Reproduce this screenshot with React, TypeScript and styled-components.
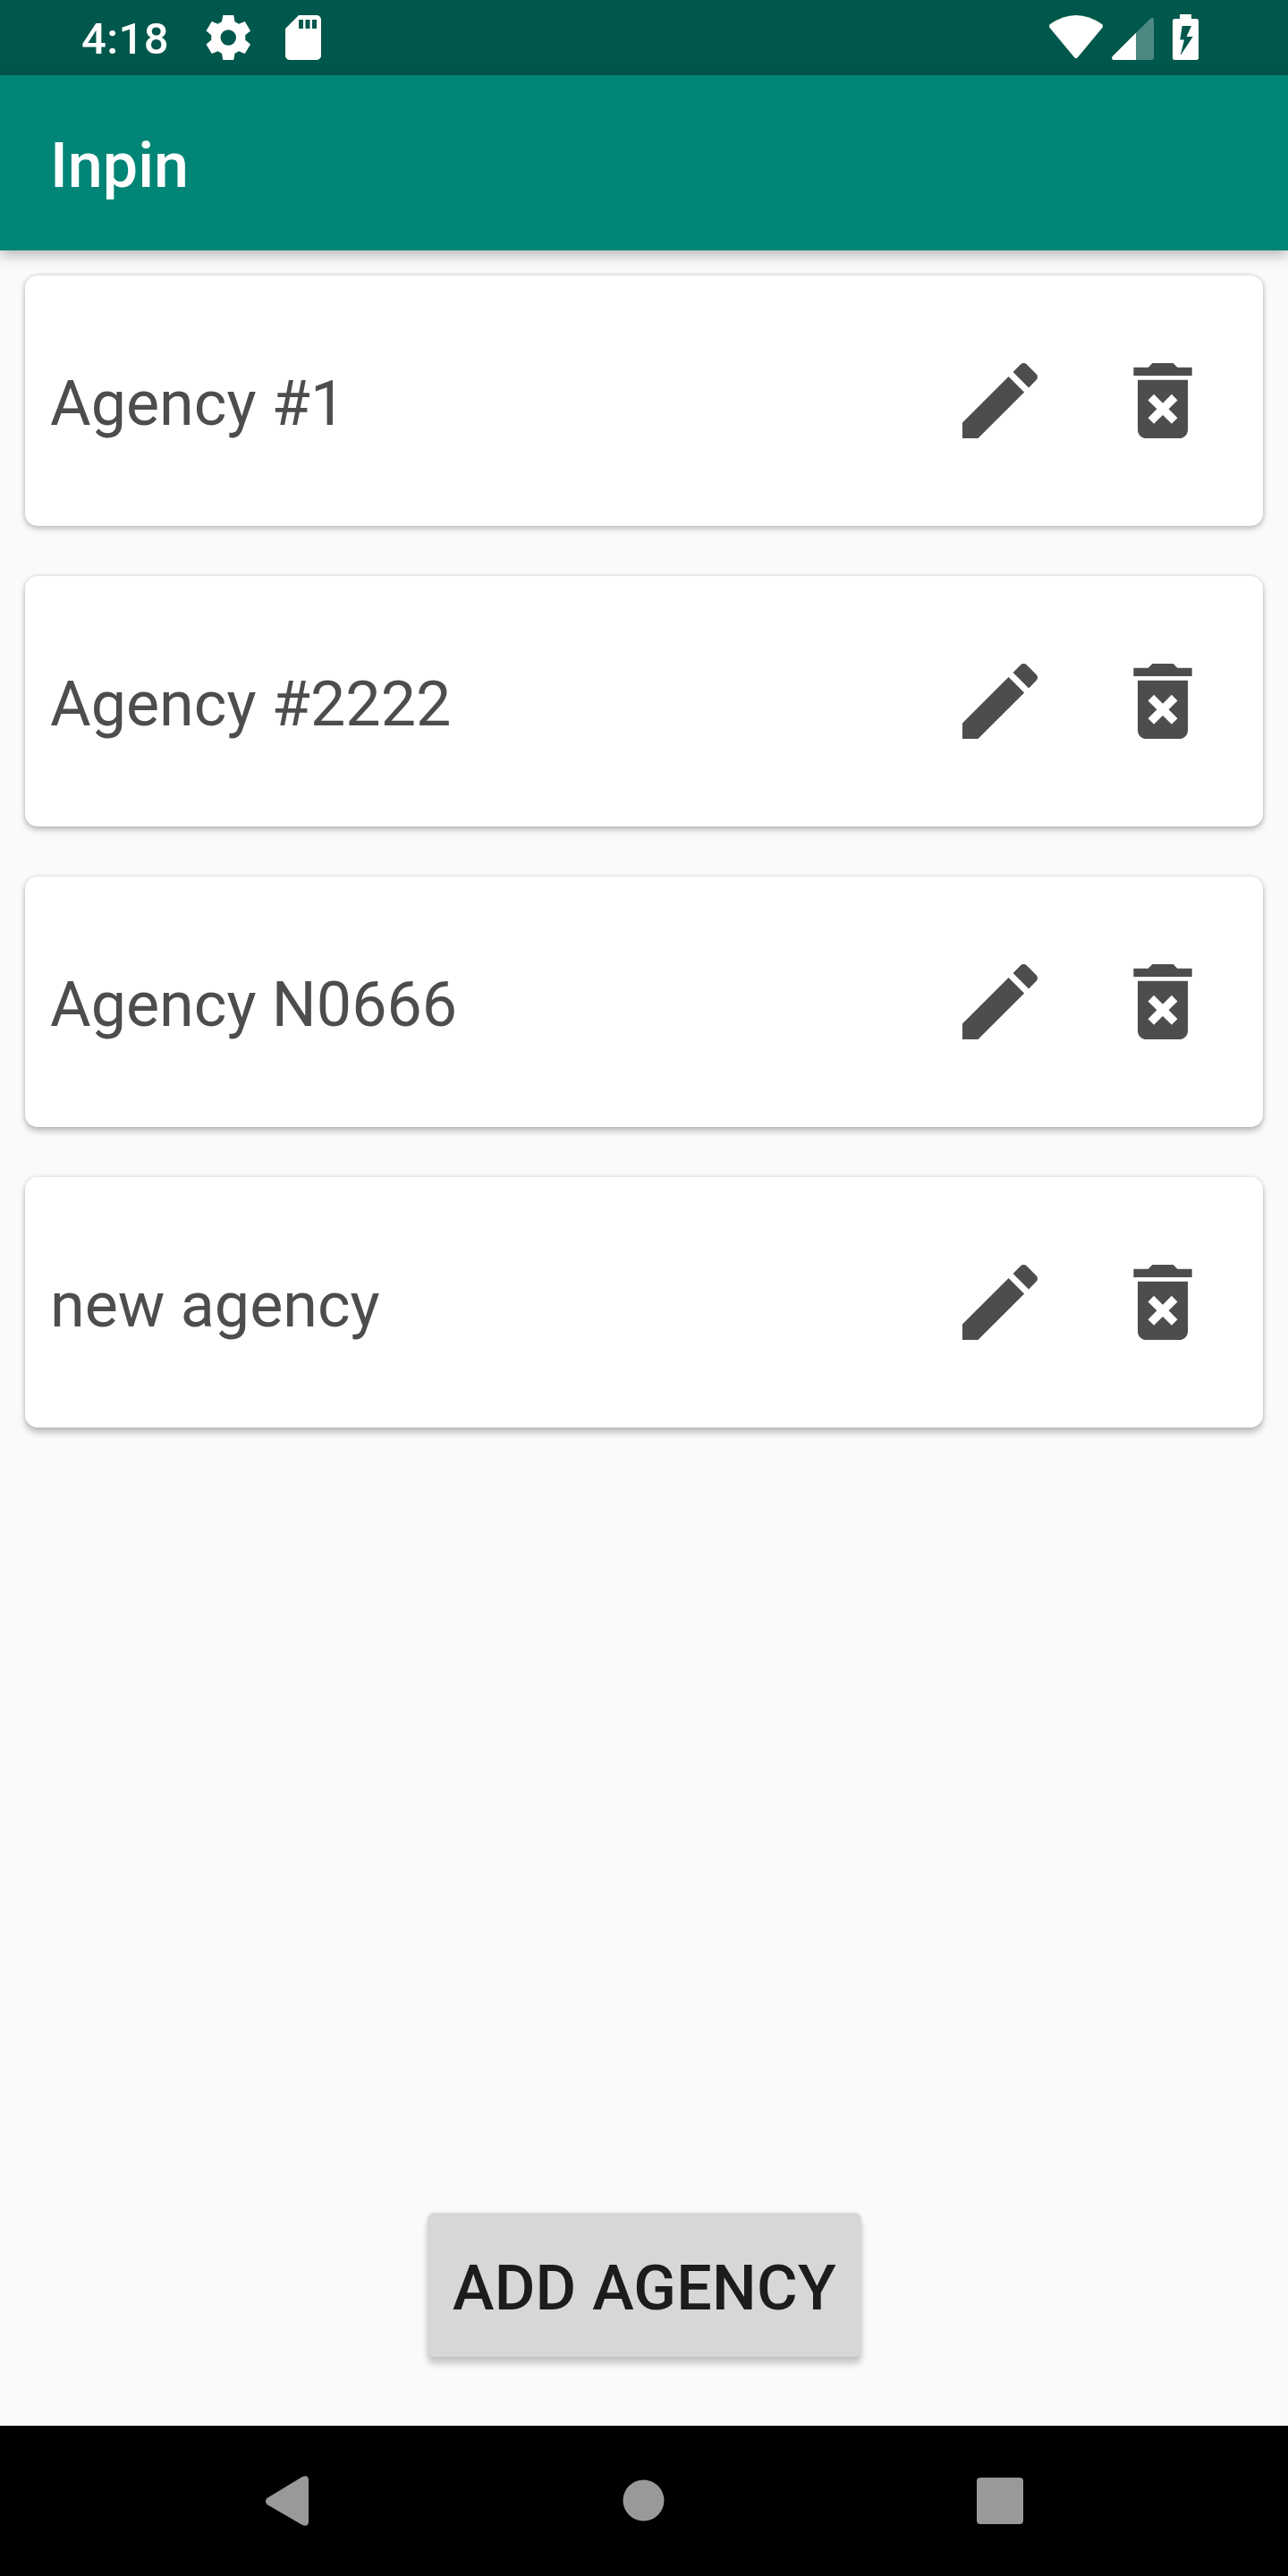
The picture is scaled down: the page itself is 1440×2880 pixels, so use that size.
import React from "react";
import styled, { createGlobalStyle } from "styled-components";

const GlobalStyle = createGlobalStyle`
  * { box-sizing: border-box; }
  body { margin: 0; background: #fafafa; font-family: Roboto, "Liberation Sans", sans-serif; }
  button { font: inherit; border: 0; background: none; padding: 0; }
`;

const Screen = styled.div`
  width: 1440px;
  height: 2880px;
  display: flex;
  flex-direction: column;
  background: #fafafa;
  overflow: hidden;
`;

const StatusBar = styled.header`
  height: 84px;
  flex: none;
  display: flex;
  align-items: center;
  justify-content: space-between;
  padding: 0 85px 0 91px;
  background: #00574b;
  color: #fff;
`;

const StatusGroup = styled.div<{ $gap: number }>`
  display: flex;
  align-items: center;
  gap: ${(p) => p.$gap}px;
`;

const Clock = styled.time`
  width: 110px;
  padding-top: 4px;
  font-size: 49px;
  line-height: 58px;
  font-weight: 500;
  letter-spacing: 0.4px;
`;

const Toolbar = styled.div`
  height: 196px;
  flex: none;
  display: flex;
  align-items: center;
  padding: 6px 56px 0;
  background: #008577;
  box-shadow: 0 5px 14px rgba(0, 0, 0, 0.28);
`;

const Title = styled.h1`
  margin: 0;
  color: #fff;
  font-size: 70px;
  line-height: 82px;
  font-weight: 500;
`;

const List = styled.ul`
  flex: 1;
  margin: 0;
  padding: 28px;
  list-style: none;
  display: flex;
  flex-direction: column;
  gap: 56px;
`;

const Card = styled.li<{ $drop: number }>`
  height: 280px;
  padding: 0 28px;
  display: flex;
  align-items: center;
  gap: 14px;
  border-radius: 14px;
  background: #fff;
  box-shadow: 0 ${(p) => p.$drop}px 7px rgba(0, 0, 0, 0.22), 0 0 5px rgba(0, 0, 0, 0.14);
`;

const AgencyName = styled.span`
  flex: 1;
  padding-top: 6px;
  font-size: 70px;
  line-height: 82px;
  color: #4d4d4d;
`;

const IconButton = styled.button`
  width: 168px;
  height: 168px;
  display: flex;
  align-items: center;
  justify-content: center;
  color: #4d4d4d;
`;

const Footer = styled.div`
  flex: none;
  display: flex;
  justify-content: center;
  padding: 0 0 77px 1px;
`;

const AddButton = styled.button`
  && {
    width: 485px;
    height: 161px;
    padding-top: 6px;
    border-radius: 7px;
    background: #d6d8d7;
    color: #1c1c1c;
    font-size: 70px;
    line-height: 82px;
    font-weight: 500;
    letter-spacing: 0.25px;
    white-space: nowrap;
    box-shadow: 0 8px 7px rgba(0, 0, 0, 0.2), 0 0 4px rgba(0, 0, 0, 0.08);
  }
`;

const NavBar = styled.nav`
  height: 168px;
  flex: none;
  display: flex;
  align-items: center;
  justify-content: space-between;
  padding: 0 266px;
  background: #000;
`;

const Icon = styled.svg<{ $w: number; $h?: number }>`
  display: block;
  flex: none;
  width: ${(p) => p.$w}px;
  height: ${(p) => p.$h ?? p.$w}px;
  fill: currentColor;
`;

const NavIcon = styled(Icon)`
  color: #999;
`;

const agencies = ["Agency #1", "Agency #2222", "Agency N0666", "new agency"];

const PencilIcon = () => (
  <Icon $w={112} viewBox="0 0 24 24">
    <path d="M3 17.25V21h3.75L17.81 9.94l-3.75-3.75L3 17.25zM20.71 7.04c.39-.39.39-1.02 0-1.41l-2.34-2.34c-.39-.39-1.02-.39-1.41 0l-1.83 1.83 3.75 3.75 1.83-1.83z" />
  </Icon>
);

const TrashIcon = () => (
  <Icon $w={112} viewBox="0 0 24 24">
    <path
      fillRule="evenodd"
      d="M6 19c0 1.1.9 2 2 2h8c1.1 0 2-.9 2-2V7H6v12zm2.46-7.12l1.41-1.41L12 12.59l2.12-2.12 1.41 1.41L13.41 14l2.12 2.12-1.41 1.41L12 15.41l-2.12 2.12-1.41-1.41L10.59 14l-2.13-2.12zM15.5 4l-1-1h-5l-1 1H5v2h14V4z"
    />
  </Icon>
);

export default function App() {
  return (
    <>
      <GlobalStyle />
      <Screen>
        <StatusBar>
          <StatusGroup $gap={24}>
            <Clock>4:18</Clock>
            <Icon $w={60} viewBox="0 0 24 24">
              <path
                fillRule="evenodd"
                d="M9.7 2h4.8l.5 2.9 1.8 1 2.700-1.100 2.500 4.200L19.700 10.900v2.200l2.300 1.900-2.500 4.200-2.700-1.100-1.800 1-.5 2.900H9.700l-.5-2.900-1.800-1-2.700 1.100-2.500-4.200 2.300-1.900v-2.200L2.200 9l2.500-4.200 2.700 1.100 1.800-1zM12.100 8.500a3.500 3.500 0 1 0 0 7 3.500 3.500 0 0 0 0-7z"
              />
            </Icon>
            <Icon $w={60} viewBox="0 0 24 24">
              <path d="M18 2h-8L4.02 8 4 20c0 1.1.9 2 2 2h12c1.1 0 2-.9 2-2V4c0-1.1-.9-2-2-2zm-6 6h-2V4h2v4zm3 0h-2V4h2v4zm3 0h-2V4h2v4z" />
            </Icon>
          </StatusGroup>
          <Icon $w={190} $h={68} viewBox="1165 8 190 68">
            <path d="M1174 27Q1203 7 1232 27Q1234 29 1232 31.500L1205 64Q1203 66.500 1201 64L1174 31.500Q1172 29 1174 27Z" />
            <path opacity=".3" d="M1270 36.700L1286 21Q1290 18 1290 22.500V64Q1290 67 1287 67H1270Z" />
            <path d="M1270 36.700V67H1245Q1241.500 66 1244 62.700Z" />
            <path
              fillRule="evenodd"
              d="M1319 16H1332V21H1337.500Q1340 21 1340 23.500V64.500Q1340 67 1337.500 67H1313.500Q1311 67 1311 64.500V23.500Q1311 21 1313.500 21H1319ZM1321.700 29L1319.300 44.500H1324L1319.700 62L1333.700 41H1326.500L1332 29Z"
            />
          </Icon>
        </StatusBar>
        <Toolbar>
          <Title>Inpin</Title>
        </Toolbar>
        <List>
          {agencies.map((name, index) => (
            <Card key={name} $drop={3 + index}>
              <AgencyName>{name}</AgencyName>
              <IconButton aria-label="Edit">
                <PencilIcon />
              </IconButton>
              <IconButton aria-label="Delete">
                <TrashIcon />
              </IconButton>
            </Card>
          ))}
        </List>
        <Footer>
          <AddButton>ADD AGENCY</AddButton>
        </Footer>
        <NavBar>
          <NavIcon $w={110} viewBox="266 2741 110 110">
            <path d="M298.500 2793L338 2769Q345 2766.500 345 2773V2819Q345 2825.500 338 2823L298.500 2800Q295.500 2796.500 298.500 2793Z" />
          </NavIcon>
          <NavIcon $w={110} viewBox="665 2741 110 110">
            <circle cx="719.5" cy="2795.5" r="23" />
          </NavIcon>
          <NavIcon $w={110} viewBox="1064 2741 110 110">
            <rect x="1092" y="2770" width="52" height="52" rx="4" />
          </NavIcon>
        </NavBar>
      </Screen>
    </>
  );
}
